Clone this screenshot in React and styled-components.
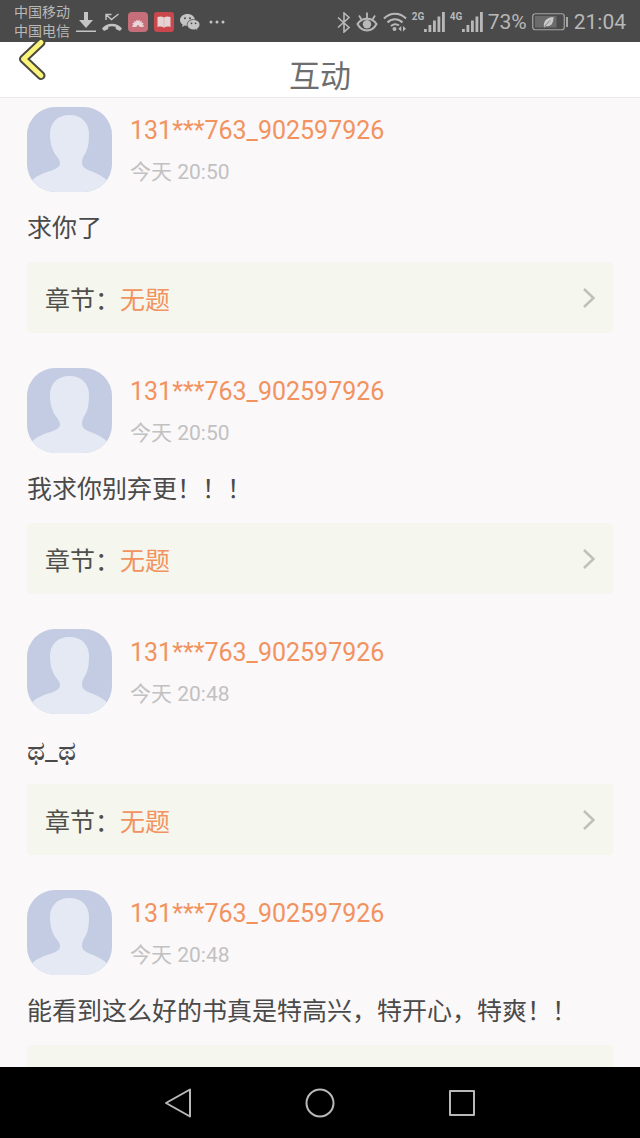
import styled, { createGlobalStyle } from "styled-components";

const GlobalStyle = createGlobalStyle`
  * {
    box-sizing: border-box;
  }
  body {
    margin: 0;
    background: #faf8f9;
    font-family: Roboto, "Noto Sans CJK SC", sans-serif;
  }
  button {
    padding: 0;
    border: 0;
    background: none;
    font: inherit;
    cursor: pointer;
  }
  svg {
    display: block;
    flex: none;
  }
`;

const Screen = styled.div`
  display: flex;
  flex-direction: column;
  height: 100vh;
  overflow: hidden;
`;

const StatusBar = styled.div`
  display: flex;
  justify-content: space-between;
  align-items: center;
  flex: none;
  height: 42px;
  padding: 2px 14px 0;
  background: #4a4a4a;
  color: #b8b8b8;
`;
const StatusGroup = styled.div`
  display: flex;
  align-items: center;
  gap: ${(props) => props.$gap};
`;
const Carriers = styled.div`
  font-size: 14px;
  line-height: 19px;
  white-space: nowrap;
`;
const StatusText = styled.span`
  font-size: 21px;
  line-height: 24px;
`;

const Header = styled.header`
  position: relative;
  flex: none;
  height: 56px;
  padding-top: 15px;
  background: #fff;
  border-bottom: 1px solid #e9e9e9;
`;
const Title = styled.h1`
  margin: 0;
  text-align: center;
  font-weight: 400;
  font-size: 31px;
  line-height: 40px;
  color: #6e6e6e;
`;
const BackButton = styled.button`
  position: absolute;
  left: 18px;
  top: -6px;
`;

const Feed = styled.main`
  flex: 1;
  min-height: 0;
  padding: 9px 27px 0;
  overflow-y: auto;
  scrollbar-width: none;
`;
const Comment = styled.article`
  padding-bottom: 35px;
`;
const Author = styled.div`
  display: flex;
  gap: 18px;
`;
const AvatarBox = styled.div`
  flex: none;
  width: 85px;
  height: 85px;
  border-radius: 28px;
  overflow: hidden;
`;
const Name = styled.a`
  display: block;
  padding-top: 8px;
  font-size: 25px;
  line-height: 32px;
  color: #f2935f;
  text-decoration: none;
`;
const Time = styled.time`
  display: block;
  padding-top: 10px;
  font-size: 21px;
  line-height: 30px;
  color: #c2c1c2;
`;
const Message = styled.p`
  margin: 0;
  padding: 18px 0 15px;
  font-size: ${(props) => (props.$emoticon ? "28px" : "25px")};
  line-height: 37px;
  color: #4a4a4a;
`;
const Chapter = styled.a`
  display: flex;
  justify-content: space-between;
  align-items: center;
  height: 71px;
  padding: 0 18px;
  border-radius: 4px;
  background: #f5f6ee;
  font-size: 25px;
  color: #4f4f4b;
  text-decoration: none;
`;
const ChapterName = styled.span`
  color: #f2935f;
`;

const NavBar = styled.nav`
  display: flex;
  justify-content: center;
  align-items: center;
  gap: 112px;
  flex: none;
  height: 71px;
  background: #000;
`;

const comments = [
  { id: 1, name: "131***763_902597926", time: "今天 20:50", text: "求你了" },
  { id: 2, name: "131***763_902597926", time: "今天 20:50", text: "我求你别弃更！！！" },
  { id: 3, name: "131***763_902597926", time: "今天 20:48", text: "ಥ_ಥ", emoticon: true },
  {
    id: 4,
    name: "131***763_902597926",
    time: "今天 20:48",
    text: "能看到这么好的书真是特高兴，特开心，特爽！！",
  },
];

const DownloadIcon = () => (
  <svg width="20" height="22" viewBox="0 0 20 22" fill="#c4c4c4">
    <path d="M8 1h4v8h5l-7 8-7-8h5z" />
    <path d="M0 19.500h20v1.500H0z" />
  </svg>
);

const MissedCallIcon = () => (
  <svg width="20" height="20" viewBox="0 0 20 20" fill="none" stroke="#c4c4c4">
    <path d="M4 8V2.500h5.500M4.500 3l5 4.500L16.500 2" strokeWidth="1.400" />
    <path d="M0 16.500C4.500 10 15.500 10 20 16.500l-2 2.500-4.300-2v-2.200c-2-.7-5.400-.7-7.400 0V17L2 19z" fill="#c4c4c4" stroke="none" />
  </svg>
);

const HuaweiIcon = () => (
  <svg width="20" height="20" viewBox="0 0 20 20">
    <rect width="20" height="20" rx="4" fill="#c66f7a" />
    <g fill="#ecd9dc">
      {[-90, -62, -36, -12, 12, 36, 62, 90].map((angle) => (
        <ellipse key={angle} cx="10" cy="10.500" rx="1" ry="2.600" transform={`rotate(${angle} 10 14)`} />
      ))}
    </g>
  </svg>
);

const BookIcon = () => (
  <svg width="20" height="20" viewBox="0 0 20 20">
    <rect width="20" height="20" rx="3" fill="#c9474d" />
    <path d="M3.500 5c2.500-1 5-.7 6.500.5 1.500-1.200 4-1.500 6.500-.5v10c-2.500-.7-5-.5-6.500.7-1.500-1.200-4-1.400-6.500-.7z" fill="#e6d3d3" />
    <path d="M10 5.500v10" stroke="#d3a9ab" strokeWidth="0.600" />
  </svg>
);

const WeChatIcon = () => (
  <svg width="20" height="18" viewBox="0 0 20 18">
    <path d="M7.500 1C3.300 1 0 3.700 0 7c0 1.900 1 3.500 2.700 4.600L2 14l2.700-1.400c.9.300 1.800.4 2.800.4 4.100 0 7.500-2.700 7.500-6S11.600 1 7.500 1z" fill="#c4c4c4" />
    <path d="M13.500 6.500c-3.500 0-6.300 2.300-6.300 5.200s2.800 5.200 6.300 5.200c.8 0 1.600-.1 2.300-.4l2.200 1.200-.6-2c1.500-.9 2.500-2.400 2.500-4 0-2.900-2.900-5.200-6.400-5.200z" fill="#c4c4c4" stroke="#4a4a4a" strokeWidth="0.800" />
    <g fill="#4a4a4a">
      <circle cx="5" cy="5.300" r="1" />
      <circle cx="10" cy="5.300" r="1" />
      <circle cx="11.500" cy="10.300" r="0.900" />
      <circle cx="15.600" cy="10.300" r="0.900" />
    </g>
  </svg>
);

const MoreIcon = () => (
  <svg width="20" height="4" viewBox="0 0 20 4" fill="#c4c4c4">
    <circle cx="5" cy="2" r="1.500" />
    <circle cx="11" cy="2" r="1.500" />
    <circle cx="17" cy="2" r="1.500" />
  </svg>
);

const BluetoothIcon = () => (
  <svg width="14" height="21" viewBox="0 0 14 21" fill="none" stroke="#b8b8b8" strokeWidth="1.600">
    <path d="M1 5.500l11 10L7 20V1l5 4.500-11 10" />
  </svg>
);

const EyeIcon = () => (
  <svg width="22" height="20" viewBox="0 0 22 20" fill="none" stroke="#b8b8b8" strokeWidth="2">
    <path d="M1.500 12C6 5 16 5 20.500 12 16 20.500 6 20.500 1.500 12z" />
    <path d="M11 0.500v6M3 3.500L5.500 7.500M19 3.500L16.500 7.500" strokeWidth="1.800" />
    <circle cx="11" cy="12.300" r="4.200" fill="#b8b8b8" stroke="none" />
  </svg>
);

const WifiIcon = () => (
  <svg width="24" height="20" viewBox="0 0 24 20" fill="none" stroke="#b8b8b8" strokeWidth="2">
    <path d="M1 6.500C7 0 17 0 23 6.500M4.500 10.500c4-4.500 11-4.500 15 0M8 14.200c2-2.500 5.500-2.700 8-.7" />
    <circle cx="11.500" cy="17" r="2" fill="#b8b8b8" stroke="none" />
    <path d="M18.300 14v5.500l-3-2.700zM20 14v5.500l3-2.700z" fill="#b8b8b8" stroke="none" />
  </svg>
);

const SignalBox = styled.div`
  display: flex;
  align-items: flex-start;
  height: 20px;
`;
const SignalLabel = styled.span`
  width: 12px;
  font-size: 10px;
  line-height: 10px;
  font-weight: 700;
`;

const Signal = ({ label }) => (
  <SignalBox>
    <SignalLabel>{label}</SignalLabel>
    <svg width="21" height="20" viewBox="0 0 21 20" fill="#b8b8b8">
      <path d="M0 17h2.800v3H0zM4.500 13h2.800v7H4.500zM9 8.500h2.800V20H9zM13.500 4.500h2.800V20h-2.800zM18 0h2.800v20H18z" />
    </svg>
  </SignalBox>
);

const BatteryIcon = () => (
  <svg width="37" height="18" viewBox="0 0 37 18">
    <rect x="0.750" y="0.750" width="31.500" height="16" rx="2.500" fill="none" stroke="#a5a5a5" strokeWidth="1.200" />
    <rect x="3" y="3" width="21.500" height="11.500" fill="#6b6b6b" />
    <path d="M12 14c-1-5 2-9.500 9.500-10 0 7-3 10-7.500 9l-1.500 1.500z" fill="#c8c8c8" />
    <path d="M12.500 13.500l5.500-6" stroke="#6b6b6b" strokeWidth="0.800" />
    <path d="M34 4h2v10h-2z" fill="#a5a5a5" />
  </svg>
);

const BackIcon = () => (
  <svg width="30" height="46" viewBox="0 0 30 46" fill="none" strokeLinecap="round" strokeLinejoin="round">
    <path d="M23 6.500L5.500 23l17.500 16.500" stroke="#4b4a40" strokeWidth="9" />
    <path d="M23 6.500L5.500 23l17.500 16.500" stroke="#faf47a" strokeWidth="5" />
  </svg>
);

const Avatar = () => (
  <svg width="85" height="85" viewBox="0 0 85 85">
    <rect width="85" height="85" fill="#c3cce3" />
    <path
      d="M42.500 8C30 8 23 16 23 27c0 9 2 15 5 20 3 4 5 6 5 9 0 4-3 5-7 7C16 66 9 69 3 75v10h79V75c-5-5-12-9-21-12-4-2-6-4-6-7 0-4 1-6 3-9 3-5 4-11 4-20C62 16 55 8 42.500 8z"
      fill="#e4e9f4"
    />
  </svg>
);

const Chevron = () => (
  <svg width="12" height="22" viewBox="0 0 12 22" fill="none" stroke="#bfc0ba" strokeWidth="2.500">
    <path d="M1 2l9.500 9L1 20" />
  </svg>
);

const CommentItem = ({ name, time, text, emoticon }) => (
  <Comment>
    <Author>
      <AvatarBox>
        <Avatar />
      </AvatarBox>
      <div>
        <Name href="#user">{name}</Name>
        <Time>{time}</Time>
      </div>
    </Author>
    <Message $emoticon={emoticon}>{text}</Message>
    <Chapter href="#chapter">
      <span>
        章节：<ChapterName>无题</ChapterName>
      </span>
      <Chevron />
    </Chapter>
  </Comment>
);

export default function App() {
  return (
    <Screen>
      <GlobalStyle />
      <StatusBar>
        <StatusGroup $gap="6px">
          <Carriers>
            中国移动
            <br />
            中国电信
          </Carriers>
          <DownloadIcon />
          <MissedCallIcon />
          <HuaweiIcon />
          <BookIcon />
          <WeChatIcon />
          <MoreIcon />
        </StatusGroup>
        <StatusGroup $gap="5px">
          <BluetoothIcon />
          <EyeIcon />
          <WifiIcon />
          <Signal label="2G" />
          <Signal label="4G" />
          <StatusText>73%</StatusText>
          <BatteryIcon />
          <StatusText>21:04</StatusText>
        </StatusGroup>
      </StatusBar>
      <Header>
        <BackButton aria-label="返回">
          <BackIcon />
        </BackButton>
        <Title>互动</Title>
      </Header>
      <Feed>
        {comments.map((comment) => (
          <CommentItem key={comment.id} {...comment} />
        ))}
      </Feed>
      <NavBar>
        <button aria-label="返回">
          <svg width="30" height="32" viewBox="0 0 30 32" fill="none" stroke="#b9b9b9" strokeWidth="2" strokeLinejoin="round">
            <path d="M27 2.500v27L3 16z" />
          </svg>
        </button>
        <button aria-label="主页">
          <svg width="30" height="30" viewBox="0 0 30 30" fill="none" stroke="#b9b9b9" strokeWidth="2">
            <circle cx="15" cy="15" r="13.500" />
          </svg>
        </button>
        <button aria-label="最近任务">
          <svg width="30" height="30" viewBox="0 0 30 30" fill="none" stroke="#b9b9b9" strokeWidth="2" strokeLinejoin="round">
            <rect x="3" y="3" width="24" height="24" />
          </svg>
        </button>
      </NavBar>
    </Screen>
  );
}
